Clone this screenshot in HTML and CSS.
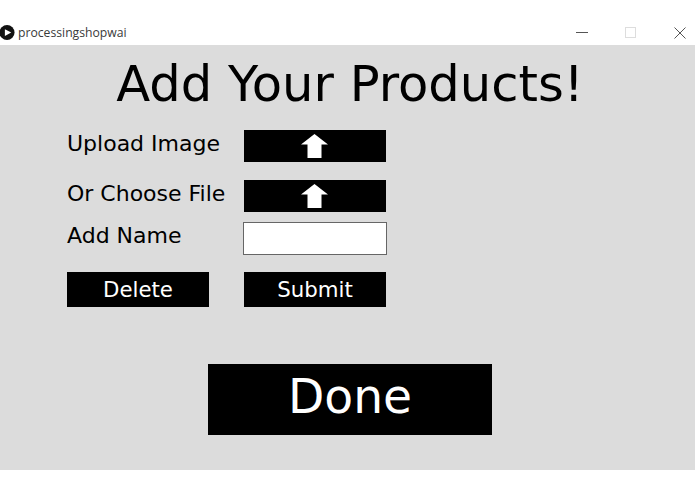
FILE: index.html
```html
<!DOCTYPE html>
<html lang="en">
<head>
<meta charset="utf-8">
<title>processingshopwai</title>
<link rel="stylesheet" href="styles.css">
</head>
<body>
<div class="window">
  <header class="titlebar">
    <div class="app">
      <svg class="app-icon" viewBox="0 0 16 16" aria-hidden="true"><circle cx="7.5" cy="8" r="8" fill="#111"/><path d="M5.2 4.4 12 8 5.2 11.6Z" fill="#fff"/></svg>
      <span class="app-name">processingshopwai</span>
    </div>
    <div class="controls">
      <svg class="ctl" viewBox="0 0 12 12" aria-hidden="true"><path d="M0 5.5H12" stroke="#555" stroke-width="1" fill="none"/></svg>
      <svg class="ctl" viewBox="0 0 12 12" aria-hidden="true"><rect x="0.5" y="0.5" width="10" height="10" stroke="#ddd" stroke-width="1" fill="none"/></svg>
      <svg class="ctl" viewBox="0 0 12 12" aria-hidden="true"><path d="M0.5 0.5 11.5 11.5M11.5 0.5 0.5 11.5" stroke="#555" stroke-width="1" fill="none"/></svg>
    </div>
  </header>
  <main class="canvas">
    <h1 class="title">Add Your Products!</h1>
    <div class="form">
      <div class="row row-upload">
        <span class="label">Upload Image</span>
        <button class="btn" type="button" aria-label="Upload image"><svg class="arrow" viewBox="0 0 27 24" aria-hidden="true"><path d="M13.5 0 27 10.5H20.5V24H6.5V10.5H0Z" fill="#fff"/></svg></button>
      </div>
      <div class="row row-file">
        <span class="label">Or Choose File</span>
        <button class="btn" type="button" aria-label="Choose file"><svg class="arrow" viewBox="0 0 27 24" aria-hidden="true"><path d="M13.5 0 27 10.5H20.5V24H6.5V10.5H0Z" fill="#fff"/></svg></button>
      </div>
      <div class="row row-name">
        <span class="label">Add Name</span>
        <input class="name-input" type="text" aria-label="Add name">
      </div>
      <div class="row row-actions">
        <button class="btn btn-text" type="button">Delete</button>
        <button class="btn btn-text" type="button">Submit</button>
      </div>
    </div>
    <button class="done" type="button">Done</button>
  </main>
</div>
</body>
</html>
```
FILE: styles.css
```css
* { box-sizing: border-box; }
html, body { margin: 0; padding: 0; background: #fff; }
body { width: 695px; height: 494px; overflow: hidden; font-family: "DejaVu Sans", sans-serif; }
.window { display: flex; flex-direction: column; height: 470px; }
.titlebar { height: 45px; flex: none; display: flex; justify-content: space-between; align-items: flex-end; padding-bottom: 5px; background: #fff; }
.app { display: flex; align-items: center; gap: 3px; }
.app-icon { width: 15px; height: 15px; display: block; }
.app-name { font-family: "Open Sans", "Noto Sans", sans-serif; font-size: 12.2px; line-height: 15px; color: #3a3a3a; }
.controls { display: flex; gap: 37px; margin-right: 9px; align-items: center; padding-bottom: 1px; }
.ctl { width: 12px; height: 12px; display: block; }
.canvas { flex: 1; padding-left: 5px; background: #dcdcdc; display: flex; flex-direction: column; align-items: center; }
.title { margin: 8px 0 0; height: 62px; font-size: 49.6px; font-weight: 400; line-height: 62px; color: #000; white-space: nowrap; }
.form { align-self: flex-start; margin: 15px 0 0 62px; display: flex; flex-direction: column; }
.row { display: flex; align-items: center; }
.row-file { margin-top: 18px; }
.row-name { margin-top: 10px; }
.row-name .label { margin-bottom: 5px; }
.row-actions { margin-top: 17px; gap: 35px; }
.label { width: 177px; margin-bottom: 4px; font-size: 22px; line-height: 28px; color: #000; white-space: nowrap; }
.btn { width: 142px; height: 32px; padding: 0; border: 0; background: #000; color: #fff; display: flex; align-items: center; justify-content: center; font-family: inherit; }
.btn-text { height: 35px; font-size: 21.3px; }
.arrow { width: 27px; height: 24px; margin-right: 2px; display: block; }
.name-input { width: 144px; height: 33px; margin-left: -1px; background: #fff; border: 1px solid #666; padding: 0; border-radius: 0; outline: 0; }
.done { width: 284px; height: 71px; margin-top: 57px; padding: 0 0 6px; border: 0; background: #000; color: #fff; font-family: inherit; font-size: 47.2px; }
```
